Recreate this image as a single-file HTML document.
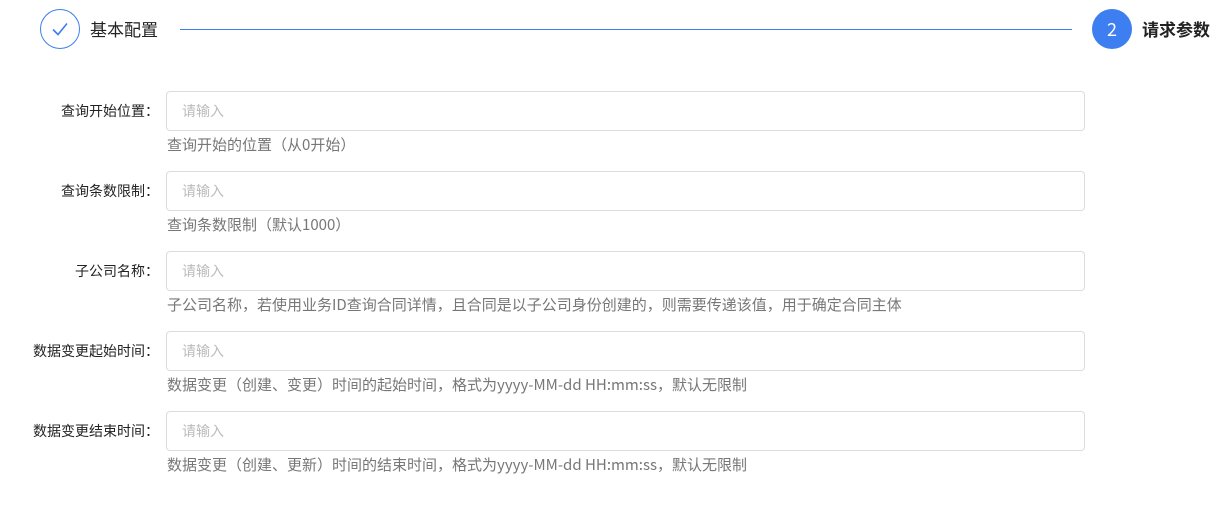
<!DOCTYPE html>
<html><head><meta charset="utf-8"><style>
body{margin:0;width:1227px;height:515px;background:#fff;font-family:"Noto Sans CJK SC","Liberation Sans",sans-serif;position:relative;overflow:hidden}
.c1{position:absolute;left:40px;top:9px;width:38px;height:38px;border:1px solid #3d7ef0;border-radius:50%}
.c2{position:absolute;left:1092px;top:9px;width:40px;height:40px;background:#3d7ef0;border-radius:50%;color:#fff;font-size:18px;line-height:40px;text-align:center}
.t{position:absolute;top:17px;font-size:17px;color:#222;line-height:24px}
.line{position:absolute;left:180px;width:892px;top:29px;height:1px;background:#3d7ef0}
.lab{position:absolute;right:1068px;font-size:14px;color:#222;line-height:40px;white-space:nowrap}
.in{position:absolute;left:166px;height:38px;border:1px solid #dcdcdc;border-radius:4px;font-size:14px;color:#bbb;line-height:38px;padding-left:15px;box-sizing:content-box}
.h{position:absolute;left:167px;font-size:15px;color:#777;line-height:20px;white-space:nowrap}
</style></head><body>
<div class="c1"><svg width="38" height="38" viewBox="0 0 38 38"><path d="M12 19.5l5 5 9-11" fill="none" stroke="#3d7ef0" stroke-width="1.6"/></svg></div>
<div class="t" style="left:90px">基本配置</div>
<div class="line"></div>
<div class="c2">2</div>
<div class="t" style="left:1142px;font-weight:bold">请求参数</div>

<div class="lab" style="top:91px">查询开始位置：</div><div class="in" style="top:91px;width:902px">请输入</div><div class="h" style="top:135px">查询开始的位置（从0开始）</div>
<div class="lab" style="top:171px">查询条数限制：</div><div class="in" style="top:171px;width:902px">请输入</div><div class="h" style="top:215px">查询条数限制（默认1000）</div>
<div class="lab" style="top:251px">子公司名称：</div><div class="in" style="top:251px;width:902px">请输入</div><div class="h" style="top:295px">子公司名称，若使用业务ID查询合同详情，且合同是以子公司身份创建的，则需要传递该值，用于确定合同主体</div>
<div class="lab" style="top:331px">数据变更起始时间：</div><div class="in" style="top:331px;width:902px">请输入</div><div class="h" style="top:375px">数据变更（创建、变更）时间的起始时间，格式为yyyy-MM-dd HH:mm:ss，默认无限制</div>
<div class="lab" style="top:411px">数据变更结束时间：</div><div class="in" style="top:411px;width:902px">请输入</div><div class="h" style="top:455px">数据变更（创建、更新）时间的结束时间，格式为yyyy-MM-dd HH:mm:ss，默认无限制</div>
</body></html>
